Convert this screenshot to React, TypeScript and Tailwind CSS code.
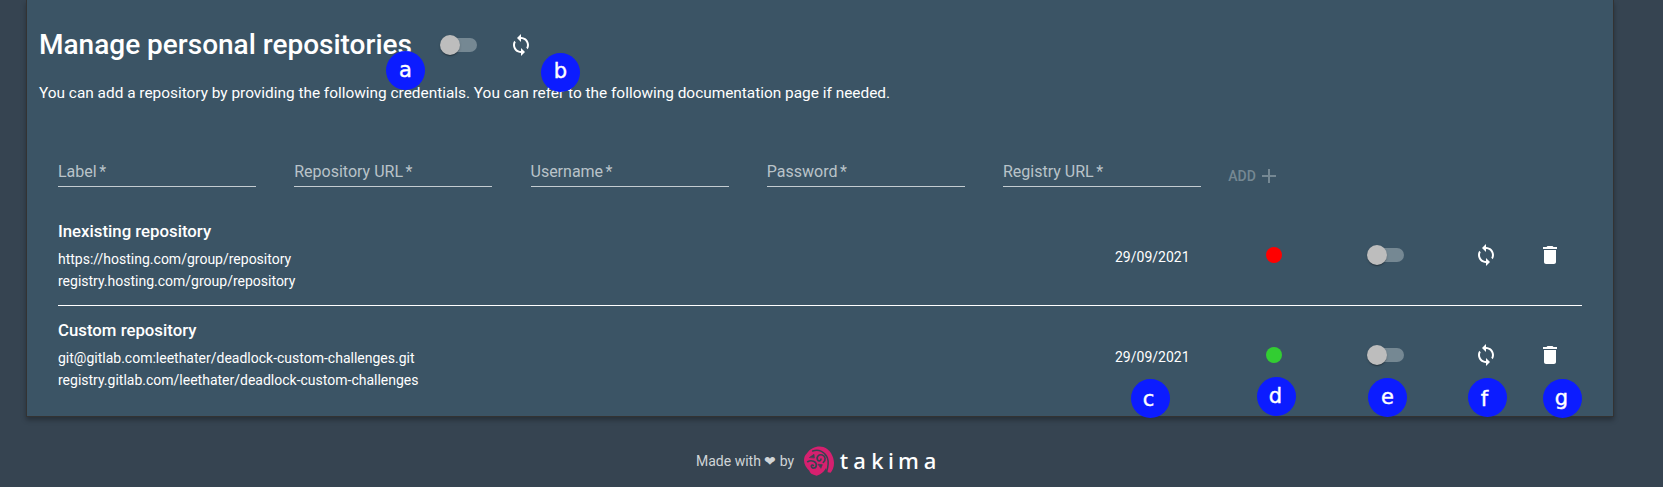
import type { ReactNode } from "react";
import { MdAdd, MdDelete, MdSync } from "react-icons/md";

const fields = ["Label", "Repository URL", "Username", "Password", "Registry URL"];

const repositories = [
  {
    name: "Inexisting repository",
    url: "https://hosting.com/group/repository",
    registry: "registry.hosting.com/group/repository",
    date: "29/09/2021",
    dot: "bg-[#ff0000]",
    textPadding: "pt-[13px]",
  },
  {
    name: "Custom repository",
    url: "git@gitlab.com:leethater/deadlock-custom-challenges.git",
    registry: "registry.gitlab.com/leethater/deadlock-custom-challenges",
    date: "29/09/2021",
    dot: "bg-[#32cd32] mb-px",
    textPadding: "pt-3",
  },
];

function Toggle() {
  return (
    <button type="button" role="switch" aria-checked="false" className="flex h-5 w-[37px] shrink-0 items-center">
      <span className="z-10 h-5 w-5 shrink-0 rounded-full bg-[#bdbdbd] shadow-[0_2px_1px_-1px_rgba(0,0,0,.2),0_1px_1px_rgba(0,0,0,.14),0_1px_3px_rgba(0,0,0,.12)]" />
      <span className="-ml-[19px] h-3.5 w-9 shrink-0 rounded-lg bg-[#758893]" />
    </button>
  );
}

function Marker({ place, children }: { place: string; children: ReactNode }) {
  return (
    <span
      className={`absolute z-20 flex h-[39px] w-[39px] justify-center rounded-full bg-[#0c1cff] font-['DejaVu_Sans',sans-serif] text-[21px] text-white [-webkit-text-stroke:0.4px_white] ${place}`}
    >
      {children}
    </span>
  );
}

function TakimaMark() {
  return (
    <svg width="30" height="30" viewBox="0 0 90 90" fill="none">
      <path
        d="M9 22C20 4 42-2 58 3C78 9 90 32 90 51C90 63 86 74 80 80L71 79C68 72 66 68 66 66C62 74 54 84 38 89C24 86 17 80 16 74C7 66 0 56 0 43C0 34 3 27 9 22Z"
        fill="#d6206f"
      />
      <g stroke="#364451" strokeLinecap="round" strokeLinejoin="round">
        <path d="M26 15C44 9 63 17 70 35C76 51 72 65 67 80" strokeWidth="4.5" />
        <path d="M58 49C66 43 65 30 55 27C44 24 36 33 41 42C44 47 51 45 51 39" strokeWidth="5" />
        <path d="M11 47C22 41 38 46 37 58C36 68 23 69 22 60C22 57 26 56 28 58" strokeWidth="5" />
        <path d="M17 34L30 25L31 35Z" strokeWidth="2" fill="#364451" />
        <path d="M43 55L55 56L51 66Z" strokeWidth="2" fill="#364451" />
      </g>
    </svg>
  );
}

function Wordmark() {
  return (
    <span className="ml-[3px] flex pb-0.5 text-center font-['Noto_Sans',sans-serif] text-[22px] leading-[31px] font-medium text-white">
      <span className="w-3.5">t</span>
      <span className="w-[17px]">a</span>
      <span className="w-[19px]">k</span>
      <span className="w-2">i</span>
      <span className="w-[27px]">m</span>
      <span className="w-4">a</span>
    </span>
  );
}

export default function App() {
  return (
    <div className="relative h-[487px] w-[1663px] overflow-hidden bg-[#364451] font-[Roboto,sans-serif] text-white">
      <main className="ml-[26px] h-[417px] w-[1588px] border border-t-0 border-[#333] bg-[#3b5465] shadow-[0_3px_5px_rgba(0,0,0,.3)]">
        <header className="flex h-[90px] items-center pl-3">
          <h1 className="w-[401px] text-[28px] font-medium">Manage personal repositories</h1>
          <Toggle />
          <button type="button" className="ml-8">
            <MdSync size={24} />
          </button>
        </header>
        <p className="-mt-[9px] pl-3 text-[15.4px] leading-6">
          You can add a repository by providing the following credentials. You can refer to the following documentation
          page if needed.
        </p>
        <form className="mt-[55px] ml-[31px] flex h-[27px] gap-[38.25px]">
          {fields.map((field) => (
            <label key={field} className="h-[27px] w-[198px] border-b border-[#c4ccd1] text-base leading-6 text-[#b9c3c9]">
              {field}
              <span className="ml-[2.5px]">*</span>
            </label>
          ))}
          <button type="button" disabled className="-mb-px -ml-[11px] flex items-center self-end text-sm font-medium text-[#758893]">
            ADD
            <MdAdd size={24} className="ml-px" />
          </button>
        </form>
        <ul className="mx-[31px] mt-[19px] divide-y divide-white">
          {repositories.map((repo) => (
            <li key={repo.name} className="flex h-[100px]">
              <div className={`w-[1057px] ${repo.textPadding}`}>
                <h2 className="text-[16.8px] leading-6 font-medium">{repo.name}</h2>
                <p className="mt-[5px] text-sm leading-[22px]">{repo.url}</p>
                <p className="text-sm leading-[22px]">{repo.registry}</p>
              </div>
              <div className="flex h-[98px] items-center">
                <time className="w-[151px] pt-1 text-sm">{repo.date}</time>
                <span className={`h-4 w-4 rounded-full ${repo.dot}`} />
                <div className="ml-[85px] flex">
                  <Toggle />
                </div>
                <button type="button" className="ml-[70px]">
                  <MdSync size={24} />
                </button>
                <button type="button" className="ml-10">
                  <MdDelete size={24} />
                </button>
              </div>
            </li>
          ))}
        </ul>
      </main>
      <footer className="mt-7 ml-[696px] flex h-8 items-center text-sm text-[#d0d4d7]">
        <span className="w-[108px]">Made with ❤ by</span>
        <TakimaMark />
        <Wordmark />
      </footer>
      <Marker place="left-[386px] top-[51px] leading-[38px]">a</Marker>
      <Marker place="left-[541px] top-[53px] leading-[36px]">b</Marker>
      <Marker place="left-[1131px] top-[379px] pr-1 leading-[40px]">c</Marker>
      <Marker place="left-[1257px] top-[377px] pr-0.5 leading-[38px]">d</Marker>
      <Marker place="left-[1368px] top-[378px] leading-[39px]">e</Marker>
      <Marker place="left-[1468px] top-[378px] pr-1.5 leading-[42px]">f</Marker>
      <Marker place="left-[1543px] top-[379px] pr-0.5 leading-[38px]">g</Marker>
    </div>
  );
}
